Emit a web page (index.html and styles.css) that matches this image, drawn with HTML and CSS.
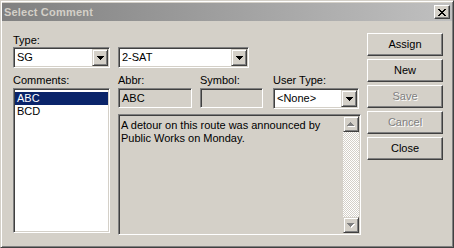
FILE: index.html
```html
<!DOCTYPE html>
<html>
<head>
<meta charset="utf-8">
<title>Select Comment</title>
<link rel="stylesheet" href="styles.css">
</head>
<body>
<div class="window">
  <div class="titlebar">
    <span class="title">Select Comment</span>
    <span class="title-close">
      <svg width="8" height="7" viewBox="0 0 8 7" shape-rendering="crispEdges"><path fill="#000" d="M0 0h2v1H0z M6 0h2v1H6z M1 1h2v1H1z M5 1h2v1H5z M2 2h4v1H2z M3 3h2v1H3z M2 4h4v1H2z M1 5h2v1H1z M5 5h2v1H5z M0 6h2v1H0z M6 6h2v1H6z"/></svg>
    </span>
  </div>
  <div class="content">
    <div class="form">
      <div class="label">Type:</div>
      <div class="row-combos">
        <div class="combo combo-type">
          <span class="combo-text">SG</span>
          <span class="drop"><svg width="7" height="4" viewBox="0 0 7 4" shape-rendering="crispEdges"><path fill="#000" d="M0 0h7v1H0z M1 1h5v1H1z M2 2h3v1H2z M3 3h1v1H3z"/></svg></span>
        </div>
        <div class="combo combo-sub">
          <span class="combo-text">2-SAT</span>
          <span class="drop"><svg width="7" height="4" viewBox="0 0 7 4" shape-rendering="crispEdges"><path fill="#000" d="M0 0h7v1H0z M1 1h5v1H1z M2 2h3v1H2z M3 3h1v1H3z"/></svg></span>
        </div>
      </div>
      <div class="row-main">
        <div class="list-col">
          <div class="label label-gap">Comments:</div>
          <div class="listbox">
            <div class="item selected">ABC</div>
            <div class="item">BCD</div>
          </div>
        </div>
        <div class="detail-col">
          <div class="fields">
            <div class="field f-abbr">
              <div class="label label-gap">Abbr:</div>
              <div class="edit">ABC</div>
            </div>
            <div class="field f-symbol">
              <div class="label label-gap">Symbol:</div>
              <div class="edit"></div>
            </div>
            <div class="field f-usertype">
              <div class="label label-gap">User Type:</div>
              <div class="combo">
                <span class="combo-text">&lt;None&gt;</span>
                <span class="drop"><svg width="7" height="4" viewBox="0 0 7 4" shape-rendering="crispEdges"><path fill="#000" d="M0 0h7v1H0z M1 1h5v1H1z M2 2h3v1H2z M3 3h1v1H3z"/></svg></span>
              </div>
            </div>
          </div>
          <div class="memo">
            <div class="memo-text">A detour on this route was announced by Public Works on Monday.</div>
            <div class="vscroll">
              <span class="sbtn"><svg width="8" height="5" viewBox="0 0 8 5" shape-rendering="crispEdges"><path fill="#fff" d="M4 1h1v1H4z M3 2h3v1H3z M2 3h5v1H2z M1 4h7v1H1z"/><path fill="#808080" d="M3 0h1v1H3z M2 1h3v1H2z M1 2h5v1H1z M0 3h7v1H0z"/></svg></span>
              <span class="track"></span>
              <span class="sbtn"><svg width="8" height="5" viewBox="0 0 8 5" shape-rendering="crispEdges"><path fill="#fff" d="M1 1h7v1H1z M2 2h5v1H2z M3 3h3v1H3z M4 4h1v1H4z"/><path fill="#808080" d="M0 0h7v1H0z M1 1h5v1H1z M2 2h3v1H2z M3 3h1v1H3z"/></svg></span>
            </div>
          </div>
        </div>
      </div>
    </div>
    <div class="buttons">
      <div class="btn">Assign</div>
      <div class="btn">New</div>
      <div class="btn disabled">Save</div>
      <div class="btn disabled">Cancel</div>
      <div class="btn">Close</div>
    </div>
  </div>
</div>
</body>
</html>
```
FILE: styles.css
```css
html, body {
  margin: 0;
  padding: 0;
}
body {
  width: 454px;
  height: 248px;
  overflow: hidden;
  background: #d4d0c8;
  font-family: "Liberation Sans", Arial, sans-serif;
  font-size: 11px;
  line-height: 13px;
  color: #000;
}
.window {
  box-sizing: border-box;
  width: 454px;
  height: 248px;
  background: #d4d0c8;
  border: 1px solid;
  border-color: #d4d0c8 #404040 #404040 #d4d0c8;
  box-shadow: inset 1px 1px #fff, inset -1px -1px #808080;
  padding: 2px 0 0 1px;
  display: flex;
  flex-direction: column;
}
.titlebar {
  height: 18px;
  margin-right: 1px;
  display: flex;
  align-items: center;
  justify-content: space-between;
  padding: 0 2px;
  background: linear-gradient(to right, #808080, #c0c0c0);
}
.title {
  font-weight: bold;
  color: #d4d0c8;
  letter-spacing: 0.2px;
}
.title-close {
  box-sizing: border-box;
  width: 16px;
  height: 14px;
  display: flex;
  align-items: center;
  justify-content: center;
  background: #d4d0c8;
  border: 1px solid;
  border-color: #fff #404040 #404040 #fff;
  box-shadow: inset -1px -1px #808080;
}
.content {
  flex: 1;
  display: flex;
  padding-left: 11px;
}
.form {
  width: 348px;
  padding-top: 13px;
}
.label {
  height: 13px;
  white-space: nowrap;
}
.label-gap {
  margin-bottom: 1px;
}
.row-combos {
  display: flex;
}
.combo {
  box-sizing: border-box;
  height: 21px;
  display: flex;
  align-items: center;
  padding: 1px;
  background: #fff;
  border: 1px solid;
  border-color: #808080 #fff #fff #808080;
  box-shadow: inset 1px 1px #404040, inset -1px -1px #d4d0c8;
}
.combo-type {
  width: 97px;
}
.combo-sub {
  width: 131px;
  margin-left: 8px;
}
.combo-text {
  flex: 1;
  padding-left: 2px;
  white-space: nowrap;
}
.drop {
  box-sizing: border-box;
  width: 16px;
  height: 17px;
  display: flex;
  align-items: center;
  justify-content: center;
  background: #d4d0c8;
  border: 1px solid;
  border-color: #d4d0c8 #404040 #404040 #d4d0c8;
  box-shadow: inset 1px 1px #fff, inset -1px -1px #808080;
}
.row-main {
  display: flex;
  margin-top: 6px;
}
.list-col {
  width: 97px;
}
.listbox {
  box-sizing: border-box;
  height: 145px;
  padding: 3px 1px 1px;
  background: #fff;
  border: 1px solid;
  border-color: #808080 #fff #fff #808080;
  box-shadow: inset 1px 1px #404040, inset -1px -1px #d4d0c8;
}
.item {
  height: 13px;
  padding-left: 2px;
}
.item.selected {
  background: #0a246a;
  color: #fff;
}
.detail-col {
  width: 243px;
  margin-left: 8px;
}
.fields {
  display: flex;
  align-items: flex-start;
}
.f-abbr {
  width: 74px;
}
.f-symbol {
  width: 63px;
  margin-left: 8px;
}
.f-usertype {
  width: 86px;
  margin-left: 10px;
}
.edit {
  box-sizing: border-box;
  height: 20px;
  padding: 3px 3px 0;
  background: #d4d0c8;
  border: 1px solid;
  border-color: #808080 #fff #fff #808080;
  box-shadow: inset 1px 1px #404040, inset -1px -1px #d4d0c8;
}
.memo {
  box-sizing: border-box;
  height: 121px;
  margin-top: 5px;
  display: flex;
  padding: 1px;
  background: #d4d0c8;
  border: 1px solid;
  border-color: #808080 #fff #fff #808080;
  box-shadow: inset 1px 1px #404040, inset -1px -1px #d4d0c8;
}
.memo-text {
  flex: 1;
  padding: 3px 2px 0 1px;
}
.vscroll {
  width: 16px;
  display: flex;
  flex-direction: column;
}
.sbtn {
  box-sizing: border-box;
  width: 16px;
  height: 16px;
  display: flex;
  align-items: center;
  justify-content: center;
  background: #d4d0c8;
  border: 1px solid;
  border-color: #d4d0c8 #404040 #404040 #d4d0c8;
  box-shadow: inset 1px 1px #fff, inset -1px -1px #808080;
}
.track {
  flex: 1;
  background: repeating-conic-gradient(#d4d0c8 0 25%, #fff 0 50%) 0 0 / 2px 2px;
}
.buttons {
  margin-left: 6px;
  padding-top: 12px;
  display: flex;
  flex-direction: column;
  gap: 3px;
}
.btn {
  box-sizing: border-box;
  width: 76px;
  height: 23px;
  display: flex;
  align-items: center;
  justify-content: center;
  background: #d4d0c8;
  border: 1px solid;
  border-color: #fff #404040 #404040 #fff;
  box-shadow: inset -1px -1px #808080;
}
.btn.disabled {
  color: #808080;
  text-shadow: 1px 1px 0 #fff;
}
```
